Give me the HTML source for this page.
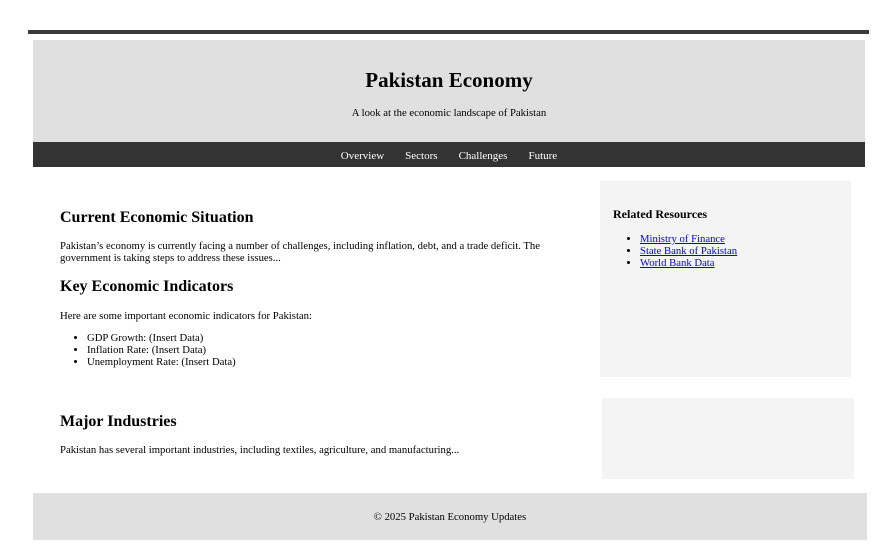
<!DOCTYPE html>
<html><head><meta charset="utf-8"><style>
*{margin:0;padding:0;box-sizing:border-box}
body{width:894px;height:558px;background:#fff;font-family:"Liberation Serif",serif;color:#000;position:relative;overflow:hidden}
.a{position:absolute}
h1{font-size:21px;font-weight:bold}
h2{font-size:16px;font-weight:bold}
p,li{font-size:10.7px;line-height:12px}
ul{list-style:disc}
a{color:#00e;text-decoration:underline}
</style></head><body>
<div class="a" style="left:28px;top:30px;width:841px;height:4px;background:#3a3a3a"></div>
<div class="a" style="left:33px;top:40px;width:832px;height:102px;background:#e0e0e0"></div>
<h1 class="a" style="left:0;width:898px;text-align:center;top:68px">Pakistan Economy</h1>
<p class="a" style="left:0;width:898px;text-align:center;top:107px;font-size:10.7px">A look at the economic landscape of Pakistan</p>
<div class="a" style="left:33px;top:142px;width:832px;height:25px;background:#333"></div>
<div class="a" style="left:0;width:898px;top:150px;text-align:center;color:#fff;font-size:11px">
<span style="margin:0 10.5px">Overview</span><span style="margin:0 10.5px">Sectors</span><span style="margin:0 10.5px">Challenges</span><span style="margin:0 10.5px">Future</span></div>
<h2 class="a" style="left:60px;top:209px">Current Economic Situation</h2>
<p class="a" style="left:60px;top:240px;width:500px">Pakistan’s economy is currently facing a number of challenges, including inflation, debt, and a trade deficit. The government is taking steps to address these issues...</p>
<h2 class="a" style="left:60px;top:278px">Key Economic Indicators</h2>
<p class="a" style="left:60px;top:310px">Here are some important economic indicators for Pakistan:</p>
<ul class="a" style="left:87px;top:332px"><li>GDP Growth: (Insert Data)</li><li>Inflation Rate: (Insert Data)</li><li>Unemployment Rate: (Insert Data)</li></ul>
<h2 class="a" style="left:60px;top:413px">Major Industries</h2>
<p class="a" style="left:60px;top:444px">Pakistan has several important industries, including textiles, agriculture, and manufacturing...</p>
<div class="a" style="left:600px;top:181px;width:251px;height:196px;background:#f4f4f4"></div>
<div class="a" style="left:613px;top:207px;font-size:12px;font-weight:bold">Related Resources</div>
<ul class="a" style="left:640px;top:233px"><li><a>Ministry of Finance</a></li><li><a>State Bank of Pakistan</a></li><li><a>World Bank Data</a></li></ul>
<div class="a" style="left:602px;top:398px;width:252px;height:81px;background:#f4f4f4"></div>
<div class="a" style="left:33px;top:493px;width:834px;height:47px;background:#e0e0e0"></div>
<p class="a" style="left:33px;width:834px;text-align:center;top:511px">© 2025 Pakistan Economy Updates</p>
</body></html>
